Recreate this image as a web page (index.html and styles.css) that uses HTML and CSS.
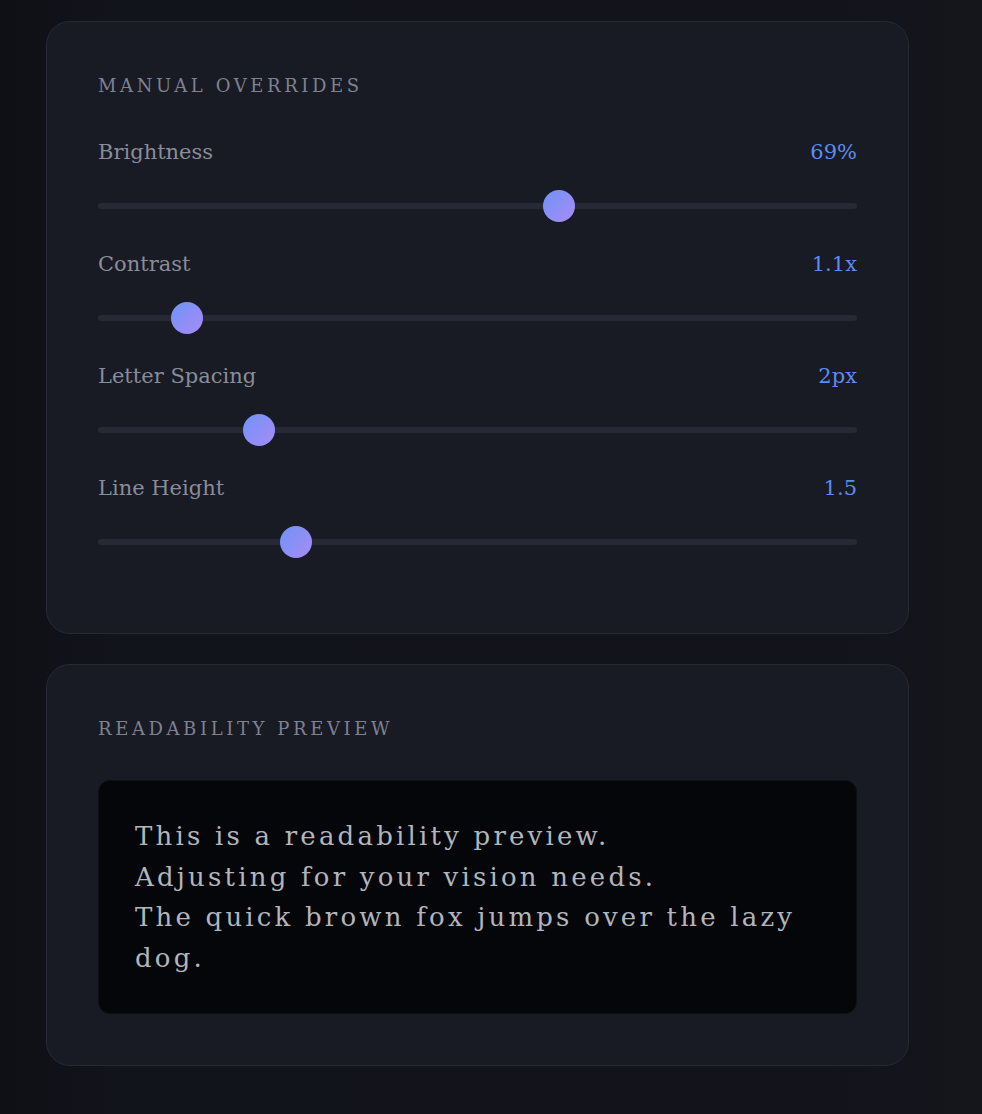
FILE: index.html
```html
<!DOCTYPE html>
<html lang="en">
<head>
    <meta charset="UTF-8">
    <meta name="viewport" content="width=device-width, initial-scale=1.0">
    <title>Vision Settings</title>
    <link rel="stylesheet" href="styles.css">
</head>
<body>
    <div class="settings-column">
        <section class="panel">
            <h2 class="panel-title">Manual Overrides</h2>
            <div class="slider-list">
                <div class="slider-row">
                    <div class="slider-head">
                        <label for="brightness">Brightness</label>
                        <span class="slider-value">69%</span>
                    </div>
                    <input class="slider" type="range" id="brightness" min="20" max="100" value="69">
                </div>
                <div class="slider-row">
                    <div class="slider-head">
                        <label for="contrast">Contrast</label>
                        <span class="slider-value">1.1x</span>
                    </div>
                    <input class="slider" type="range" id="contrast" min="1" max="2" step="0.1" value="1.1">
                </div>
                <div class="slider-row">
                    <div class="slider-head">
                        <label for="letter-spacing">Letter Spacing</label>
                        <span class="slider-value">2px</span>
                    </div>
                    <input class="slider" type="range" id="letter-spacing" min="0" max="10" value="2">
                </div>
                <div class="slider-row">
                    <div class="slider-head">
                        <label for="line-height">Line Height</label>
                        <span class="slider-value">1.5</span>
                    </div>
                    <input class="slider" type="range" id="line-height" min="1" max="3" step="0.1" value="1.5">
                </div>
            </div>
        </section>

        <section class="panel">
            <h2 class="panel-title">Readability Preview</h2>
            <div class="preview-box">
                <p>This is a readability preview.<br>
                Adjusting for your vision needs.<br>
                The quick brown fox jumps over the lazy dog.</p>
            </div>
        </section>
    </div>
</body>
</html>
```

FILE: styles.css
```css
* {
    box-sizing: border-box;
}

body {
    margin: 0;
    padding: 0;
    min-height: 100vh;
    font-family: "DejaVu Serif", "Liberation Serif", serif;
    background: linear-gradient(90deg, #0f1016 0%, #12141b 12%, #13141b 85%, #15151c 100%);
    color: #8a8e9a;
}

.settings-column {
    width: 863px;
    margin-left: 46px;
    padding: 21px 0 40px;
    display: flex;
    flex-direction: column;
    gap: 30px;
}

.panel {
    background-color: #181a24;
    border: 1px solid #262936;
    border-radius: 24px;
    padding: 50px 51px 51px;
}

.panel-title {
    margin: 0 0 37px;
    font-size: 18px;
    font-weight: normal;
    line-height: 28px;
    letter-spacing: 3.6px;
    text-transform: uppercase;
    color: #7e8290;
}

.slider-list {
    display: flex;
    flex-direction: column;
    gap: 27px;
    margin-bottom: 24px;
}

.slider-head {
    display: flex;
    justify-content: space-between;
    align-items: center;
    height: 30px;
    margin-bottom: 23px;
    font-size: 21px;
}

.slider-head label {
    color: #898d99;
}

.slider-value {
    color: #5b8def;
}

.slider {
    -webkit-appearance: none;
    appearance: none;
    display: block;
    width: 100%;
    height: 32px;
    margin: 0;
    background: transparent;
}

.slider:focus {
    outline: none;
}

.slider::-webkit-slider-runnable-track {
    height: 6px;
    border-radius: 3px;
    background-color: #272a35;
}

.slider::-webkit-slider-thumb {
    -webkit-appearance: none;
    appearance: none;
    width: 32px;
    height: 32px;
    margin-top: -13px;
    border: none;
    border-radius: 50%;
    background: linear-gradient(135deg, #6f93f7 0%, #a88bf6 100%);
}

.preview-box {
    background-color: #050609;
    border: 1px solid #0e1016;
    border-radius: 12px;
    padding: 35px 36px;
}

.preview-box p {
    margin: 0;
    font-size: 26px;
    line-height: 40.5px;
    letter-spacing: 3.2px;
    color: #b2b5bb;
}
```
